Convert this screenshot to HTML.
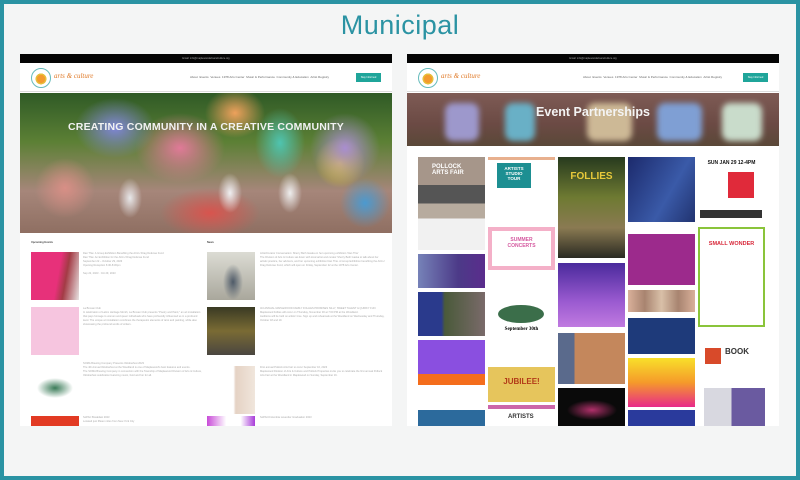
<!DOCTYPE html>
<html><head><meta charset="utf-8"><style>
*{margin:0;padding:0;box-sizing:border-box}
body{width:800px;height:480px;background:#2a93a3;font-family:"Liberation Sans",sans-serif;position:relative;overflow:hidden}
#in{position:absolute;left:4px;top:4px;width:792px;height:472px;background:#f4f5f5}
h1{position:absolute;left:0;width:800px;top:10px;text-align:center;font-weight:normal;font-size:27px;color:#2b93a3;letter-spacing:0.5px}
.shot{position:absolute;top:54px;width:372px;height:372px;background:#fff;overflow:hidden}
.bar{position:absolute;left:0;top:0;width:100%;height:9px;background:#050505;color:#aaa;font-size:2.5px;text-align:center;line-height:9px}
.hdr{position:absolute;top:9px;left:0;width:100%;height:29px;background:#fff;border-bottom:1px solid #ddd}
.logo{position:absolute;left:11px;top:5px;width:20px;height:20px;border-radius:50%;border:1.5px solid #6bb;background:radial-gradient(circle at 50% 55%,#f39a2e 0 30%,#e7bf3a 31% 40%,#fff 42%)}
.brand{position:absolute;left:34px;top:9px;color:#e07b2a;font-family:"Liberation Serif",serif;font-style:italic;font-size:7px}
.nav{position:absolute;top:12px;font-size:3px;color:#666}
.btn{position:absolute;top:10px;width:25px;height:9px;background:#1fa59a;color:#fff;font-size:2.5px;line-height:9px;text-align:center}
.t{position:absolute;font-size:2.6px;color:#aaa;line-height:4px;overflow:hidden}
.b{position:absolute}
.fig{position:absolute;top:10px;height:38px;filter:blur(3px);border-radius:8px}
</style></head><body><div id="in"></div>
<h1>Municipal</h1>

<div class="shot" style="left:20px">
<div class="bar">Email: info@maplewoodartsandculture.org</div>
<div class="hdr"><div class="logo"></div><div class="brand">arts &amp; culture</div>
<div class="nav" style="left:170px">About &nbsp;Events &nbsp;Venues &nbsp;1978 Arts Center &nbsp;Music &amp; Performance &nbsp;Community &amp; Education &nbsp;Artist Registry</div>
<div class="btn" style="left:336px">Stay Informed</div></div>
<div class="b" style="left:0;top:39px;width:372px;height:140px;background:
radial-gradient(ellipse 12px 20px at 110px 105px,#e8e8ea,transparent),
radial-gradient(ellipse 12px 20px at 210px 100px,#f0f0f2,transparent),
radial-gradient(ellipse 12px 20px at 270px 100px,#eeeeee,transparent),
radial-gradient(ellipse 40px 30px at 95px 35px,#7f86d6,transparent),
radial-gradient(ellipse 30px 25px at 215px 20px,#eea15c,transparent),
radial-gradient(ellipse 45px 35px at 160px 55px,#e07a98,transparent),
radial-gradient(ellipse 30px 30px at 45px 95px,#d88f86,transparent),
radial-gradient(ellipse 25px 35px at 260px 50px,#4fc4b0,transparent),
radial-gradient(ellipse 35px 35px at 325px 55px,#a98ed0,transparent),
radial-gradient(ellipse 50px 25px at 190px 120px,#d8544e,transparent),
radial-gradient(ellipse 25px 25px at 345px 110px,#4b9ad0,transparent),
radial-gradient(ellipse 25px 25px at 320px 70px,#e0c43a,transparent),
linear-gradient(180deg,#2f5a26 0,#5c8035 35%,#a6867a 70%,#8f6f62 100%)"></div>
<div class="b" style="left:0;top:67px;width:372px;text-align:center;color:#f2f2f2;font-size:10.5px;font-weight:bold;letter-spacing:0.2px">CREATING COMMUNITY IN A CREATIVE COMMUNITY</div>
<div class="t" style="left:11px;top:187px;color:#444;font-weight:bold">Upcoming Events</div>
<div class="t" style="left:187px;top:187px;color:#444;font-weight:bold">News</div>
<div class="b" style="left:11px;top:198px;width:48px;height:48px;background:linear-gradient(100deg,#e7317a 55%,#a33b45 70%,#e7e3e2)"></div>
<div class="b" style="left:11px;top:253px;width:48px;height:48px;background:#f6c5df"></div>
<div class="b" style="left:11px;top:308px;width:48px;height:48px;background:radial-gradient(ellipse 18px 10px at 24px 26px,#3a7b58,#fff 100%)"></div>
<div class="b" style="left:11px;top:362px;width:48px;height:10px;background:#e23a23"></div>
<div class="t" style="left:63px;top:198px;width:115px;height:40px">Dan Thie: A Group Exhibition Benefiting the ACLU Drag Defense Fund<br>Dan Thie: An Exhibition for the ACLU Drag Defense Fund<br>September 22 – October 29, 2023<br>Opening Reception 6:30-8:30pm<br><br>Sep 22, 2023 · Oct 29, 2023</div>
<div class="t" style="left:63px;top:253px;width:120px;height:40px">La Bruxan Club<br>In celebration of Latinx Heritage Month, La Bruxan Club presents "Poetry and Paint," an art installation that pays homage to women and queer individuals who have profoundly influenced us in a profound level. The unique art installation combines the therapeutic elements of tarot and painting, while also showcasing the profound words of writers.</div>
<div class="t" style="left:63px;top:308px;width:120px;height:40px">SOMA Brewing Company Presents Oktoberfest 2023<br>The 4th Annual Oktoberfest at the Woodland is one of Maplewood's best features and events.<br>The SOMA Brewing Company in connection with the Township of Maplewood Division of Arts &amp; Culture, Oktoberfest celebration featuring music, food and fun for all.</div>
<div class="t" style="left:63px;top:362px;width:120px;height:10px">SoPAC Breakfast 2023<br>Located just fifteen miles from New York City</div>
<div class="b" style="left:187px;top:198px;width:48px;height:48px;background:radial-gradient(ellipse 10px 18px at 26px 30px,#4e5a68,transparent),linear-gradient(#dcdcd4,#a9a79c)"></div>
<div class="b" style="left:187px;top:253px;width:48px;height:48px;background:linear-gradient(#3a3a24,#7a6b34 50%,#4a4640)"></div>
<div class="b" style="left:187px;top:312px;width:48px;height:48px;background:linear-gradient(90deg,#fff 55%,#e5d2c4 60%,#f0e6dc)"></div>
<div class="b" style="left:187px;top:362px;width:48px;height:10px;background:linear-gradient(90deg,#c84bd8,#fff 40%,#fff 70%,#a83bd8)"></div>
<div class="t" style="left:240px;top:198px;width:125px;height:40px">Artist/Curator Conversation: Sherry Beth Gaska on her upcoming exhibition 'Dan Thie'<br>The Division of Arts &amp; Culture sat down with local artist and curator Sherry Beth Gaska to talk about her artistic practice, her advisors, and her upcoming exhibition Dan Thie. A Group Exhibition benefiting the ACLU Drag Defense Fund, which will open on Friday, September 22 at the 1978 Arts Center.</div>
<div class="t" style="left:240px;top:253px;width:125px;height:48px">3rd ANNUAL MAPLEWOOD FAMILY FOLLIES PROMISES SILLY, SWEET TALENT & QUIRKY FUN<br>Maplewood Follies will occur on Thursday, November 30 at 7:00 PM at the Woodland.<br>Auditions will be held on artists' time. Sign up and rehearsals at the Woodland on Wednesday and Thursday, October 18 and 19.</div>
<div class="t" style="left:240px;top:312px;width:125px;height:40px">First annual Pollock Arts Fair to occur September 16, 2023<br>Maplewood Division of Arts & Culture and Pollock Properties invite you to celebrate the first annual Pollock Arts Fair at the Woodland in Maplewood on Sunday, September 16.</div>
<div class="t" style="left:240px;top:362px;width:125px;height:10px">SoPAC/Columbia Lavender Graduation 2023</div>
</div>

<div class="shot" style="left:407px">
<div class="bar">Email: info@maplewoodartsandculture.org</div>
<div class="hdr"><div class="logo"></div><div class="brand">arts &amp; culture</div>
<div class="nav" style="left:176px">About &nbsp;Events &nbsp;Venues &nbsp;1978 Arts Center &nbsp;Music &amp; Performance &nbsp;Community &amp; Education &nbsp;Artist Registry</div>
<div class="btn" style="left:336px">Stay Informed</div></div>
<div class="b" style="left:0;top:39px;width:372px;height:53px;overflow:hidden;background:linear-gradient(#7e5b55,#6b4a44 60%,#5a4838)">
<div class="fig" style="left:38px;width:34px;background:#9d98cc"></div>
<div class="fig" style="left:98px;width:30px;background:#69b0c6"></div>
<div class="fig" style="left:180px;width:45px;background:#cdb996"></div>
<div class="fig" style="left:250px;width:45px;background:#7f9fd4"></div>
<div class="fig" style="left:315px;width:40px;background:#c9dccb"></div>
</div>
<div class="b" style="left:0;top:51px;width:372px;text-align:center;color:#f4f4f4;font-size:12.5px;font-weight:bold">Event Partnerships</div>
<!-- col1 -->
<div class="b" style="left:11px;top:103px;width:67px;height:93px;background:linear-gradient(#a6968a 0 30%,#555 30% 50%,#b7ab9e 50% 66%,#f1f1f1 66%)"><div style="position:absolute;left:14px;top:7px;color:#fff;font-size:6px;font-weight:bold;line-height:6px">POLLOCK<br>ARTS FAIR</div></div>
<div class="b" style="left:11px;top:200px;width:67px;height:34px;background:linear-gradient(90deg,#7682b8,#4c3a88 60%,#5a2c8c)"></div>
<div class="b" style="left:11px;top:238px;width:67px;height:44px;background:linear-gradient(90deg,#2a3a8c 35%,#4a5a3a 40%,#7a6a6a)"></div>
<div class="b" style="left:11px;top:286px;width:67px;height:55px;background:linear-gradient(#8a4fe0 0 62%,#f46d1c 62% 82%,#fff 82%)"></div>
<div class="b" style="left:11px;top:356px;width:67px;height:16px;background:#2c6a9c"></div>
<!-- col2 -->
<div class="b" style="left:81px;top:103px;width:67px;height:65px;background:linear-gradient(#d85a 0 3px,#fff 3px)"><div style="position:absolute;left:9px;top:6px;width:34px;height:25px;background:#1d8f92;color:#fff;font-size:4.5px;font-weight:bold;text-align:center;line-height:5px;padding-top:3px">ARTISTS<br>STUDIO<br>TOUR</div></div>
<div class="b" style="left:81px;top:173px;width:67px;height:43px;background:#f6e07a;border:4px solid #f4b0c8"><div style="background:#fff;height:100%;color:#d55aa0;font-size:5px;font-weight:bold;text-align:center;line-height:6px;padding-top:6px">SUMMER<br>CONCERTS</div></div>
<div class="b" style="left:81px;top:221px;width:67px;height:87px;background:#fff"><div style="position:absolute;left:10px;top:30px;width:46px;height:18px;border-radius:50%;background:#3b6e4a"></div><div style="position:absolute;left:0;width:67px;top:52px;text-align:center;font-size:5px;font-family:'Liberation Serif',serif;font-weight:bold">September 30th</div></div>
<div class="b" style="left:81px;top:313px;width:67px;height:35px;background:#e6c55c"><div style="text-align:center;color:#b23a18;font-size:8px;font-weight:bold;padding-top:10px">JUBILEE!</div></div>
<div class="b" style="left:81px;top:351px;width:67px;height:21px;background:linear-gradient(#c6a 0 4px,#fff 4px)"><div style="position:absolute;left:20px;top:9px;font-size:6px;font-weight:bold;color:#333">ARTISTS</div></div>
<!-- col3 -->
<div class="b" style="left:151px;top:103px;width:67px;height:101px;background:linear-gradient(#273a1e,#6e7a32 40%,#8a7a52 70%,#2a2a22)"><div style="text-align:center;color:#e8c93a;font-size:10px;font-weight:bold;padding-top:14px">FOLLIES</div></div>
<div class="b" style="left:151px;top:209px;width:67px;height:64px;background:linear-gradient(#4a2a9c,#9a5ad0 60%,#c07ae0)"></div>
<div class="b" style="left:151px;top:279px;width:67px;height:51px;background:linear-gradient(90deg,#5a6a8c 25%,#c4875c 25%)"></div>
<div class="b" style="left:151px;top:334px;width:67px;height:38px;background:radial-gradient(ellipse 25px 10px at 34px 22px,#b0306a,#0a0a0a)"></div>
<!-- col4 -->
<div class="b" style="left:221px;top:103px;width:67px;height:65px;background:linear-gradient(120deg,#1c2a6c,#3a5aa8 60%,#213370)"></div>
<div class="b" style="left:221px;top:174px;width:67px;height:57px;background:linear-gradient(#fff 0 6px,#9c2a8c 6px)"></div>
<div class="b" style="left:221px;top:236px;width:67px;height:22px;background:linear-gradient(90deg,#d9b09a,#a88470,#d9c0a8,#a88470,#d9b09a)"></div>
<div class="b" style="left:221px;top:264px;width:67px;height:36px;background:#1e3a7a"></div>
<div class="b" style="left:221px;top:304px;width:67px;height:49px;background:linear-gradient(180deg,#f8e02a,#f59a2a 50%,#e82a8a)"></div>
<div class="b" style="left:221px;top:356px;width:67px;height:16px;background:#2a3a9c"></div>
<!-- col5 -->
<div class="b" style="left:291px;top:103px;width:67px;height:65px;background:#fff"><div style="font-size:5px;font-weight:bold;text-align:center;color:#111;padding-top:3px">SUN JAN 29 12-4PM</div><div style="position:absolute;left:30px;top:15px;width:26px;height:26px;background:#e02a3a"></div><div style="position:absolute;left:2px;top:53px;width:62px;height:8px;background:#333"></div></div>
<div class="b" style="left:291px;top:173px;width:67px;height:100px;background:#fff;border:2px solid #8ac43a"><div style="color:#d8283a;font-size:5.5px;font-weight:bold;text-align:center;padding-top:12px">SMALL WONDER</div></div>
<div class="b" style="left:298px;top:288px;width:60px;height:28px;background:#fff"><div style="position:absolute;left:0;top:6px;width:16px;height:16px;background:#d84a2a"></div><div style="position:absolute;left:20px;top:6px;font-size:8px;font-weight:bold;color:#333;line-height:7px">BOOK</div></div>
<div class="b" style="left:297px;top:334px;width:61px;height:38px;background:linear-gradient(90deg,#d8d8e0 45%,#6a5aa0 45%)"></div>
</div>
</body></html>
